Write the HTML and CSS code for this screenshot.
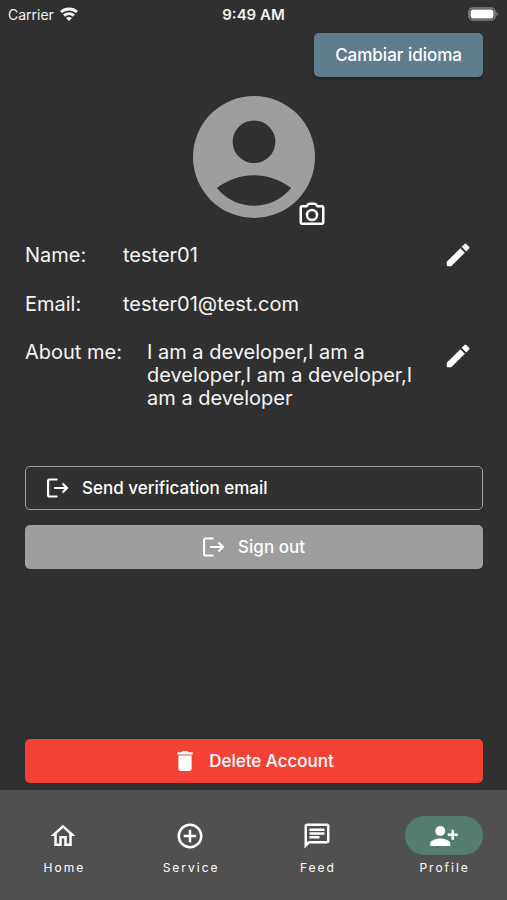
FILE: index.html
```html
<!DOCTYPE html>
<html lang="en">
<head>
<meta charset="utf-8">
<meta name="viewport" content="width=device-width, initial-scale=1">
<title>Profile</title>
<link rel="stylesheet" href="styles.css">
</head>
<body>
<header class="status">
  <div class="carrier">Carrier
    <svg width="18" height="14" viewBox="0 0 18 14" fill="none" stroke="currentColor" stroke-width="3" aria-hidden="true"><path d="M1 5c4.500-4 11.500-4 16 0M4 8.600c3-2.600 7-2.600 10 0"/><path d="M6 11c1.800-1.500 4.200-1.500 6 0l-3 3z" fill="currentColor" stroke="none"/></svg>
  </div>
  <time class="clock">9:49 AM</time>
  <svg class="battery" width="31" height="14" viewBox="0 0 31 14" aria-label="Battery full"><rect x="1" y="1" width="26" height="12" rx="4" fill="none" stroke="#858585" stroke-width="1.500"/><rect x="2.500" y="2.500" width="23" height="9" rx="2.500" fill="#fff"/><path d="M28.500 5v4c2-.8 2-3.200 0-4z" fill="#858585"/></svg>
</header>
<main class="page">
  <button class="btn language" type="button">Cambiar idioma</button>
  <div class="avatar">
    <svg class="person" viewBox="2 2 20 20" fill="currentColor" aria-hidden="true"><path fill-rule="evenodd" d="M12 2a10 10 0 1 0 0 20 10 10 0 0 0 0-20zm0 4a3.500 3.500 0 1 1 0 7 3.500 3.500 0 0 1 0-7zm0 14c-2.350 0-4.500-1-6.100-2.900 3.700-2.800 8.500-2.800 12.200 0C16.500 19 14.350 20 12 20z"/></svg>
    <button class="icon-btn camera" type="button" aria-label="Change photo">
      <svg width="30" height="30" viewBox="0 0 24 24" fill="currentColor"><path d="M20 4h-3.170l-1.240-1.350A2 2 0 0 0 14.120 2H9.880c-.56 0-1.100.24-1.480.65L7.170 4H4c-1.100 0-2 .9-2 2v12c0 1.100.9 2 2 2h16c1.100 0 2-.9 2-2V6c0-1.100-.9-2-2-2zm0 14H4V6h4.050l1.830-2h4.240l1.830 2H20v12zM12 7a5 5 0 1 0 0 10 5 5 0 0 0 0-10zm0 8a3 3 0 1 1 0-6 3 3 0 0 1 0 6z"/></svg>
    </button>
  </div>
  <dl class="details">
    <div class="row">
      <dt>Name:</dt><dd>tester01</dd>
      <button class="icon-btn" type="button" aria-label="Edit name"><svg width="30" height="30" viewBox="0 0 24 24" fill="currentColor"><path d="M3 17.400V20.200q0 .8.800.8H6.600L17.500 10.100 13.900 6.500zM20.900 6.800q.7-.7 0-1.400l-2.300-2.300q-.7-.7-1.400 0l-2.300 2.300 3.700 3.700z"/></svg></button>
    </div>
    <div class="row">
      <dt>Email:</dt><dd>tester01@test.com</dd>
    </div>
    <div class="row about">
      <dt>About me:</dt><dd>I am a developer,I am a developer,I am a developer,I am a developer</dd>
      <button class="icon-btn" type="button" aria-label="Edit about me"><svg width="30" height="30" viewBox="0 0 24 24" fill="currentColor"><path d="M3 17.400V20.200q0 .8.800.8H6.600L17.500 10.100 13.900 6.500zM20.900 6.800q.7-.7 0-1.400l-2.300-2.300q-.7-.7-1.400 0l-2.300 2.300 3.700 3.700z"/></svg></button>
    </div>
  </dl>
  <div class="actions">
    <button class="btn verify" type="button"><svg width="22" height="20" viewBox="0 0 22 20" fill="none" stroke="currentColor" stroke-width="2.200" aria-hidden="true"><path d="M10.500 1.500H2.500Q1.100 1.500 1.100 3v14q0 1.500 1.400 1.500h8M7 10h12.500M15.500 5.500L20 10l-4.500 4.500"/></svg>Send verification email</button>
    <button class="btn signout" type="button"><svg width="22" height="20" viewBox="0 0 22 20" fill="none" stroke="currentColor" stroke-width="2.200" aria-hidden="true"><path d="M10.500 1.500H2.500Q1.100 1.500 1.100 3v14q0 1.500 1.400 1.500h8M7 10h12.500M15.500 5.500L20 10l-4.500 4.500"/></svg>Sign out</button>
  </div>
  <button class="btn delete" type="button"><svg width="22" height="22" viewBox="2 2 20 20" fill="currentColor" aria-hidden="true"><path d="M6 19c0 1.100.9 2 2 2h8c1.100 0 2-.9 2-2V7H6v12zM19 4h-3.500l-1-1h-5l-1 1H5v2h14V4z"/></svg>Delete Account</button>
</main>
<nav class="tabs" aria-label="Main">
  <a href="#home"><span class="pill"><svg width="30" height="30" viewBox="0 0 24 24" fill="currentColor"><path d="M12 5.690l5 4.500V18h-2v-6H9v6H7v-7.810l5-4.500M12 3 2 12h3v8h6v-6h2v6h6v-8h3L12 3z"/></svg></span>Home</a>
  <a href="#service"><span class="pill"><svg width="30" height="30" viewBox="0 0 24 24" fill="none" stroke="currentColor" stroke-width="2"><circle cx="12" cy="12" r="9"/><path d="M12 7v10M7 12h10"/></svg></span>Service</a>
  <a href="#feed"><span class="pill"><svg width="30" height="30" viewBox="0 0 24 24" fill="currentColor"><path d="M4 4h16v12H5.170L4 17.170V4m0-2c-1.100 0-1.990.9-1.990 2L2 22l4-4h14c1.100 0 2-.9 2-2V4c0-1.100-.9-2-2-2H4zm2 10h8v2H6v-2zm0-3h12v2H6V9zm0-3h12v2H6V6z"/></svg></span>Feed</a>
  <a href="#profile" class="active" aria-current="page"><span class="pill"><svg width="30" height="30" viewBox="0 0 24 24" fill="currentColor"><circle cx="9" cy="8" r="4"/><path d="M1 18v2h16v-2c0-2.660-5.330-4-8-4s-8 1.340-8 4zM20 10V7h-2v3h-3v2h3v3h2v-3h3v-2h-3z"/></svg></span>Profile</a>
</nav>
</body>
</html>
```
FILE: styles.css
```css
* { box-sizing: border-box; }

body {
  margin: 0;
  min-height: 100vh;
  display: flex;
  flex-direction: column;
  background: #303030;
  color: #fff;
  font-family: Inter, "Liberation Sans", sans-serif;
}

svg { display: block; flex: none; }

button { font: inherit; color: inherit; cursor: pointer; }

.status {
  display: grid;
  grid-template-columns: 1fr auto 1fr;
  align-items: center;
  height: 28px;
  padding: 0 8px;
  font-size: 14px;
  color: #f2f2f2;
}

.carrier { display: flex; align-items: center; gap: 6px; }
.clock { font-size: 15px; font-weight: 600; }
.battery { justify-self: end; }

.page {
  flex: 1;
  display: flex;
  flex-direction: column;
  padding: 5px 24px 7px 25px;
}

.btn {
  display: flex;
  align-items: center;
  justify-content: center;
  gap: 13px;
  height: 44px;
  padding: 0 21px;
  border: 0;
  border-radius: 5px;
  font-size: 17px;
  font-weight: 500;
}

.language {
  align-self: flex-end;
  background: #607d8b;
  box-shadow: 0 2px 3px #0004;
}

.avatar {
  position: relative;
  align-self: center;
  width: 122px;
  margin-top: 19px;
  color: #9e9e9e;
}

.icon-btn {
  padding: 0;
  border: 0;
  background: none;
  color: #fff;
}

.camera { position: absolute; right: -12px; bottom: -12px; }

.details {
  display: flex;
  flex-direction: column;
  gap: 19px;
  margin: 22px 10px 0 0;
  font-size: 20px;
  line-height: 23px;
  color: #f5f5f5;
}

.row { display: flex; align-items: center; min-height: 30px; }
.row dt { width: 98px; flex: none; }
.row dd { flex: 1; margin: 0; }
.about { align-items: flex-start; padding-top: 3px; }
.about dt { width: 122px; }
.about dd { padding-right: 20px; }

.actions {
  display: flex;
  flex-direction: column;
  gap: 15px;
  margin-top: 56px;
}

.verify {
  justify-content: flex-start;
  border: 1px solid #9e9e9e;
  background: none;
}

.signout { background: #9e9e9e; }
.delete { margin-top: auto; background: #f44336; }

.tabs {
  display: grid;
  grid-template-columns: repeat(4, 1fr);
  height: 110px;
  padding-top: 26px;
  background: #505050;
}

.tabs a {
  display: flex;
  flex-direction: column;
  align-items: center;
  gap: 5px;
  color: #fff;
  font-size: 12px;
  line-height: 16px;
  letter-spacing: 2px;
  text-indent: 2px;
  text-decoration: none;
}

.pill {
  display: grid;
  place-items: center;
  width: 78px;
  height: 39px;
  border-radius: 20px;
}

.active .pill { background: #547d70; }
```
